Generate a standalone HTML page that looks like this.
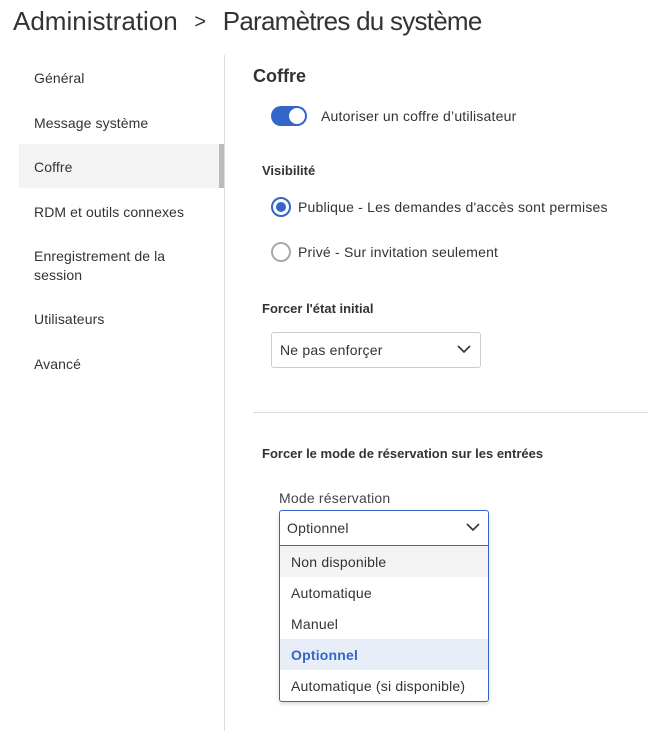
<!DOCTYPE html>
<html><head><meta charset="utf-8"><style>
*{margin:0;padding:0;box-sizing:border-box}
body{width:648px;height:731px;background:#fff;font-family:"Liberation Sans",sans-serif;color:#333;position:relative;overflow:hidden}
.a{position:absolute;white-space:nowrap}
.t{font-size:14px;letter-spacing:0.2px}
.nav{position:absolute;left:34px;font-size:14px;color:#333;letter-spacing:0.1px}
</style></head><body>
<div class="a" style="left:13px;top:6px;font-size:26px;color:#333">Administration<span style="display:inline-block;width:45px;text-align:center;font-size:20px;position:relative;top:-2px">&gt;</span><span style="letter-spacing:-0.75px">Paramètres du système</span></div>
<div class="a" style="left:224px;top:55px;width:1px;height:676px;background:#ddd"></div>
<div class="nav" style="top:70px">Général</div>
<div class="nav" style="top:115px">Message système</div>
<div class="a" style="left:19px;top:144px;width:205px;height:44px;background:#f3f3f3"></div>
<div class="a" style="left:219px;top:144px;width:5px;height:44px;background:#bbb"></div>
<div class="nav" style="top:159px">Coffre</div>
<div class="nav" style="top:204px">RDM et outils connexes</div>
<div class="nav" style="top:247px;line-height:19px">Enregistrement de la<br>session</div>
<div class="nav" style="top:311px">Utilisateurs</div>
<div class="nav" style="top:356px">Avancé</div>

<div class="a" style="left:253px;top:66px;font-size:18px;font-weight:bold;color:#333">Coffre</div>
<div class="a" style="left:271px;top:106px;width:36px;height:20px;border-radius:10px;background:#3465c8"></div>
<div class="a" style="left:289px;top:108px;width:16px;height:16px;border-radius:50%;background:#fff"></div>
<div class="a t" style="left:321px;top:108px">Autoriser un coffre d’utilisateur</div>
<div class="a" style="left:262px;top:163px;font-size:13px;font-weight:bold">Visibilité</div>
<div class="a" style="left:271px;top:197px;width:20px;height:20px;border-radius:50%;border:2px solid #3465c8"></div>
<div class="a" style="left:276px;top:202px;width:10px;height:10px;border-radius:50%;background:#3465c8"></div>
<div class="a t" style="left:298px;top:199px">Publique - Les demandes d'accès sont permises</div>
<div class="a" style="left:271px;top:242px;width:20px;height:20px;border-radius:50%;border:2px solid #aaa"></div>
<div class="a t" style="left:298px;top:244px">Privé - Sur invitation seulement</div>
<div class="a" style="left:262px;top:301px;font-size:13px;font-weight:bold">Forcer l'état initial</div>
<div class="a" style="left:271px;top:332px;width:210px;height:36px;border:1px solid #ccc;border-radius:3px"></div>
<div class="a t" style="left:280px;top:342px">Ne pas enforçer</div>
<svg class="a" style="left:457px;top:344px" width="14" height="10"><path d="M1 2l6 6 6-6" fill="none" stroke="#333" stroke-width="1.6"/></svg>
<div class="a" style="left:253px;top:412px;width:395px;height:1px;background:#ddd"></div>
<div class="a" style="left:262px;top:446px;font-size:13px;font-weight:bold">Forcer le mode de réservation sur les entrées</div>
<div class="a t" style="left:279px;top:490px;color:#444">Mode réservation</div>
<div class="a" style="left:279px;top:510px;width:210px;height:192px;border:1px solid #3465c8;border-radius:3px;box-shadow:0 2px 4px rgba(0,0,0,.15)"></div>
<div class="a" style="left:280px;top:545px;width:208px;height:1px;background:#3465c8"></div>
<div class="a t" style="left:287px;top:520px">Optionnel</div>
<svg class="a" style="left:466px;top:522px" width="14" height="10"><path d="M1 2l6 6 6-6" fill="none" stroke="#333" stroke-width="1.6"/></svg>
<div class="a" style="left:280px;top:546px;width:208px;height:31px;background:#f3f3f3"></div>
<div class="a t" style="left:291px;top:554px">Non disponible</div>
<div class="a t" style="left:291px;top:585px">Automatique</div>
<div class="a t" style="left:291px;top:616px">Manuel</div>
<div class="a" style="left:280px;top:639px;width:208px;height:31px;background:#e8eef7"></div>
<div class="a t" style="left:291px;top:647px;color:#3465c8;font-weight:bold">Optionnel</div>
<div class="a t" style="left:291px;top:678px">Automatique (si disponible)</div>
</body></html>
